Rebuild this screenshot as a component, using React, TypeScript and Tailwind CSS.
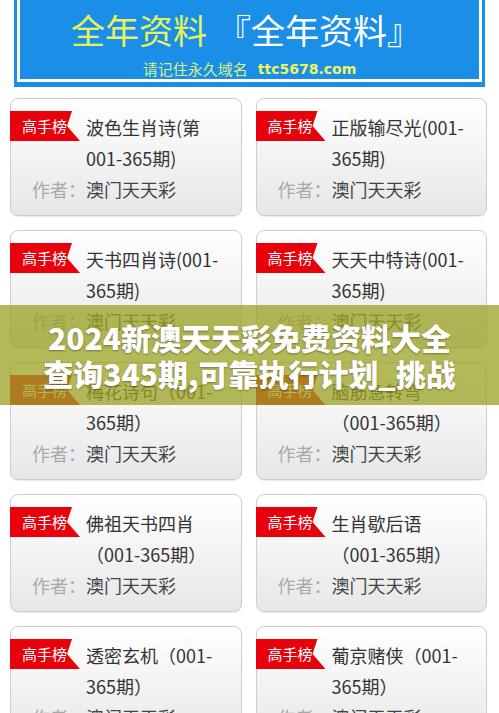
import React from "react";

type Card = { l1: string; l2: string };

const rows: [Card, Card][] = [
  [
    { l1: "波色生肖诗(第", l2: "001-365期)" },
    { l1: "正版输尽光(001-", l2: "365期)" },
  ],
  [
    { l1: "天书四肖诗(001-", l2: "365期)" },
    { l1: "天天中特诗(001-", l2: "365期)" },
  ],
  [
    { l1: "梅花诗句（001-", l2: "365期）" },
    { l1: "脑筋急转弯", l2: "（001-365期）" },
  ],
  [
    { l1: "佛祖天书四肖", l2: "（001-365期）" },
    { l1: "生肖歇后语", l2: "（001-365期）" },
  ],
  [
    { l1: "透密玄机（001-", l2: "365期）" },
    { l1: "葡京赌侠（001-", l2: "365期）" },
  ],
];

function CardBox({ c }: { c: Card }) {
  return (
    <div className="rounded-[8px] border border-[#cdcdcd] bg-gradient-to-b from-white to-[#e7e7e7] pt-[12px] pb-[10px] shadow-[0_1px_1px_rgba(0,0,0,0.08)]">
      <div className="flex items-start">
        <div className="-ml-px h-[30px] w-[70px] shrink-0 bg-[#e8000d] pl-[12px] text-[15px] leading-[30px] text-white [clip-path:polygon(0_0,62px_0,57px_50%,70px_100%,0_100%)]">
          高手榜
        </div>
        <div className="ml-[6px] mt-px w-[146px] text-[18px] leading-[31px] text-[#333]">
          <div className="whitespace-nowrap">{c.l1}</div>
          <div className="whitespace-nowrap">{c.l2}</div>
        </div>
      </div>
      <div className="pl-[21px] text-[18px] leading-[31px] whitespace-nowrap">
        <span className="text-[#a9a9a9]">作者：</span>
        <span className="text-[#444]">澳门天天彩</span>
      </div>
    </div>
  );
}

export default function App() {
  return (
    <div className="relative min-h-[713px] w-[499px] overflow-hidden bg-white font-['Noto_Sans_CJK_SC','Noto_Sans',sans-serif]">
      {/* Banner */}
      <div className="mx-[14px] bg-[#1b8fe8] px-[3px] pb-[5px]">
        <div className="border-x-[3px] border-b-[3px] border-white bg-[#1b8fe8] pt-[10px] pb-0">
          <div className="flex h-[40px] items-center pl-[51px] text-[34px] leading-[40px] whitespace-nowrap">
            <span className="text-[#e6f35c]">全年资料</span>
            <span className="ml-[10px] text-white">『全年资料』</span>
          </div>
          <div className="mt-[9px] flex h-[20px] items-center justify-center text-[15px] leading-[20px] whitespace-nowrap">
            <span className="text-[#dcf27c]">请记住永久域名</span>
            <span className="ml-[10px] font-['DejaVu_Sans',sans-serif] text-[14px] font-bold text-[#eef55e]">
              ttc5678.com
            </span>
          </div>
        </div>
      </div>

      {/* Cards */}
      <div className="mt-[11px] grid grid-cols-2 gap-x-[14px] gap-y-[14px] pl-[10px] pr-[12px]">
        {rows.map((r, i) => (
          <React.Fragment key={i}>
            <CardBox c={r[0]} />
            <CardBox c={r[1]} />
          </React.Fragment>
        ))}
      </div>

      {/* Overlay title band */}
      <div className="absolute left-0 top-[305px] flex h-[100px] w-full flex-col items-center justify-center bg-[rgba(155,162,35,0.76)] text-[30px] font-black leading-[36px] text-white [text-shadow:0_1px_2px_rgba(0,0,0,0.35)]">
        <div className="whitespace-nowrap">2024新澳天天彩免费资料大全</div>
        <div className="whitespace-nowrap">查询345期,可靠执行计划_挑战</div>
      </div>
    </div>
  );
}
